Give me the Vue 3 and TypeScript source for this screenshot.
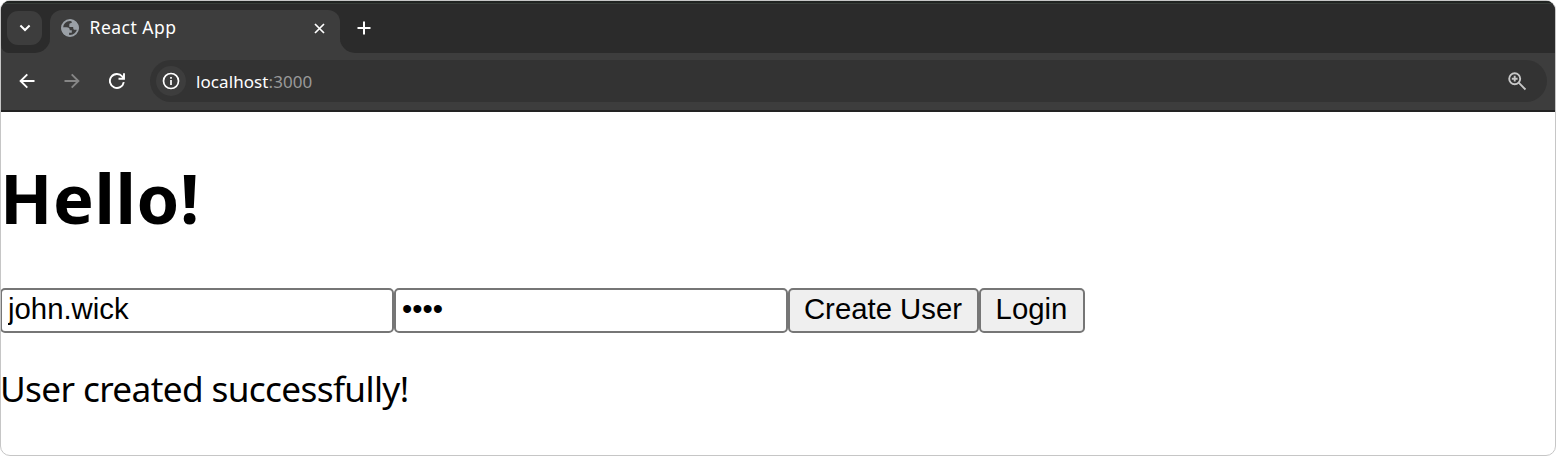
<script setup lang="ts">
import { ref } from 'vue'

const username = ref('john.wick')
const password = ref('wick')
const message = ref('User created successfully!')
</script>

<template>
  <div class="window">
    <header class="strip">
      <div class="strip-left">
        <button class="tab-search" aria-label="Search tabs">
          <svg width="12" height="8" viewBox="0 0 12 8"><path d="M1.4 1.5 6 6l4.6-4.5" fill="none" stroke="#fff" stroke-width="2" /></svg>
        </button>
      </div>
      <div class="tab">
        <svg class="globe" width="18" height="18" viewBox="0 0 18 18">
          <circle cx="9" cy="9" r="8" fill="none" stroke="#9aa0a6" stroke-width="2" />
          <path d="M9 .5C13.500.5 17.500 4.300 17.500 9c0 .5 0 .8-.1 1.200-.3.400-.9.600-1.600.6h-1.600c-1.300 0-2-.7-2-1.900v-.8H8.300V5.800c0-1.200.7-1.900 1.900-1.900h.5V2.800c0-.700-.7-1.100-1.700-1.300zM.8 8.200h4.700c2.400 0 3.300 1 3.300 3.100h2v2.500H8.100v3.400C3.700 17.100.5 13.400.5 9z" fill="#9aa0a6" />
        </svg>
        <span class="tab-title">React App</span>
        <svg class="close" width="11" height="11" viewBox="0 0 11 11"><path d="m1 1 9 9m0-9-9 9" stroke="#fff" stroke-width="1.7" /></svg>
      </div>
      <div class="strip-right">
        <svg width="14" height="14" viewBox="0 0 14 14"><path d="M7 .5v13M.5 7h13" stroke="#fff" stroke-width="2" /></svg>
      </div>
    </header>

    <nav class="toolbar">
      <svg class="back" width="16" height="16" viewBox="0 0 16 16"><path d="M15.500 8H2M8.300 1.300 1.600 8l6.700 6.700" fill="none" stroke="#fff" stroke-width="1.900" /></svg>
      <svg class="forward" width="16" height="16" viewBox="0 0 16 16"><path d="M.5 8H14M7.700 1.300 14.400 8l-6.700 6.700" fill="none" stroke="#868686" stroke-width="1.900" /></svg>
      <svg class="reload" width="16" height="16" viewBox="0 0 16 16"><path d="M14.800 9.200A7 7 0 1 1 13.300 3.500L15 5.300M15 .3v5.400H9.500" fill="none" stroke="#fff" stroke-width="1.900" /></svg>
      <div class="address">
        <span class="info">
          <svg width="18" height="18" viewBox="0 0 18 18"><circle cx="9" cy="9" r="7.500" fill="none" stroke="#fff" stroke-width="1.700" /><path d="M9 8v5M9 5v1.700" stroke="#fff" stroke-width="1.700" /></svg>
        </span>
        <span class="url"><span class="host">localhost</span><span class="port">:3000</span></span>
        <svg class="zoom" width="19" height="19" viewBox="0 0 19 19"><path d="m10.700 10.700 6.800 6.800M6.700 3.800v5.800M3.800 6.700h5.800" stroke="#c7c7c7" stroke-width="1.900" /><circle cx="6.700" cy="6.700" r="5.500" fill="none" stroke="#c7c7c7" stroke-width="1.900" /></svg>
      </div>
    </nav>

    <main class="page">
      <h1>Hello!</h1>
      <form class="controls" @submit.prevent>
        <input v-model="username" type="text" aria-label="Username" />
        <input v-model="password" type="password" aria-label="Password" />
        <button class="create" type="button">Create User</button>
        <button class="login" type="button">Login</button>
      </form>
      <p>{{ message }}</p>
    </main>
  </div>
</template>

<style>
body {
  margin: 0;
  background: #fff;
  overflow: hidden;
}
</style>

<style scoped>
.window {
  box-sizing: border-box;
  width: 1556px;
  height: 456px;
  border: 1px solid #c6c6c6;
  border-radius: 10px;
  overflow: hidden;
  background: #fff;
  color: #000;
  font-family: "Noto Sans", "Open Sans", sans-serif;
}
svg {
  display: block;
  flex: none;
}
.strip {
  display: flex;
  height: 52px;
  background: linear-gradient(#2b2b2b 26px, #3d3d3d 26px);
  box-shadow: inset 0 2px #202321, inset 0 3px #383d39;
}
.strip-left {
  box-sizing: border-box;
  width: 49px;
  padding: 10px 0 0 6px;
  background: #2b2b2b;
  border-radius: 0 0 15px 8px;
  box-shadow: inset 0 2px #202321, inset 0 3px #383d39;
}
.tab-search {
  display: flex;
  align-items: center;
  justify-content: center;
  width: 35px;
  height: 34px;
  padding: 0;
  border: 0;
  border-radius: 11px;
  background: #3d3d3d;
}
.tab {
  box-sizing: border-box;
  display: flex;
  align-items: center;
  width: 290px;
  height: 43px;
  margin-top: 9px;
  padding: 0 15px 7px 11px;
  border-radius: 12px 12px 0 0;
  background: #3d3d3d;
  color: #fff;
}
.tab-title {
  flex: 1;
  margin-left: 10.500px;
  padding-bottom: 2px;
  font-size: 17.500px;
  letter-spacing: 0.500px;
  line-height: 24px;
  white-space: nowrap;
}
.strip-right {
  flex: 1;
  padding: 20px 0 0 17px;
  background: #2b2b2b;
  border-radius: 0 0 0 15px;
  box-shadow: inset 0 2px #202321, inset 0 3px #383d39;
}
.toolbar {
  box-sizing: border-box;
  display: flex;
  align-items: center;
  height: 59px;
  padding: 0 8px 1px 18px;
  border-bottom: 2px solid #222;
  background: #3d3d3d;
}
.forward {
  margin-left: 29px;
}
.reload {
  margin-left: 29px;
}
.address {
  box-sizing: border-box;
  display: flex;
  flex: 1;
  align-items: center;
  height: 42px;
  margin-left: 25px;
  padding: 0 20px 0 6px;
  border-radius: 21px;
  background: #333;
}
.info {
  display: flex;
  align-items: center;
  justify-content: center;
  width: 30px;
  height: 30px;
  border-radius: 50%;
  background: #3d3d3d;
}
.url {
  flex: 1;
  margin-left: 10px;
  padding-top: 2px;
  font-size: 17px;
  line-height: 24px;
  letter-spacing: 0.080px;
}
.host {
  color: #fff;
}
.port {
  color: #999;
}
h1 {
  height: 88px;
  margin: 42px 0 0 -1px;
  font-size: 68.500px;
  font-weight: 700;
  letter-spacing: 0.600px;
  line-height: 88px;
}
.controls {
  display: flex;
  height: 45px;
  margin: 46px 0 0 -1px;
}
.controls input,
.controls button {
  box-sizing: border-box;
  height: 45px;
  margin: 0;
  border: 2px solid #767676;
  border-radius: 5px;
  color: #000;
  font-family: "Liberation Sans", Arial, sans-serif;
  font-size: 29.333px;
}
.controls input {
  width: 394px;
  padding: 0 5px 3px 6px;
  background: #fff;
  outline: 0;
}
.controls button {
  padding: 0 1px 4px 0;
  background: #efefef;
  white-space: nowrap;
}
.create {
  width: 191px;
}
.login {
  width: 106px;
}
p {
  margin: 31px 0 0 -1px;
  font-size: 35.200px;
  letter-spacing: -0.640px;
  line-height: 48px;
  white-space: nowrap;
}
</style>
